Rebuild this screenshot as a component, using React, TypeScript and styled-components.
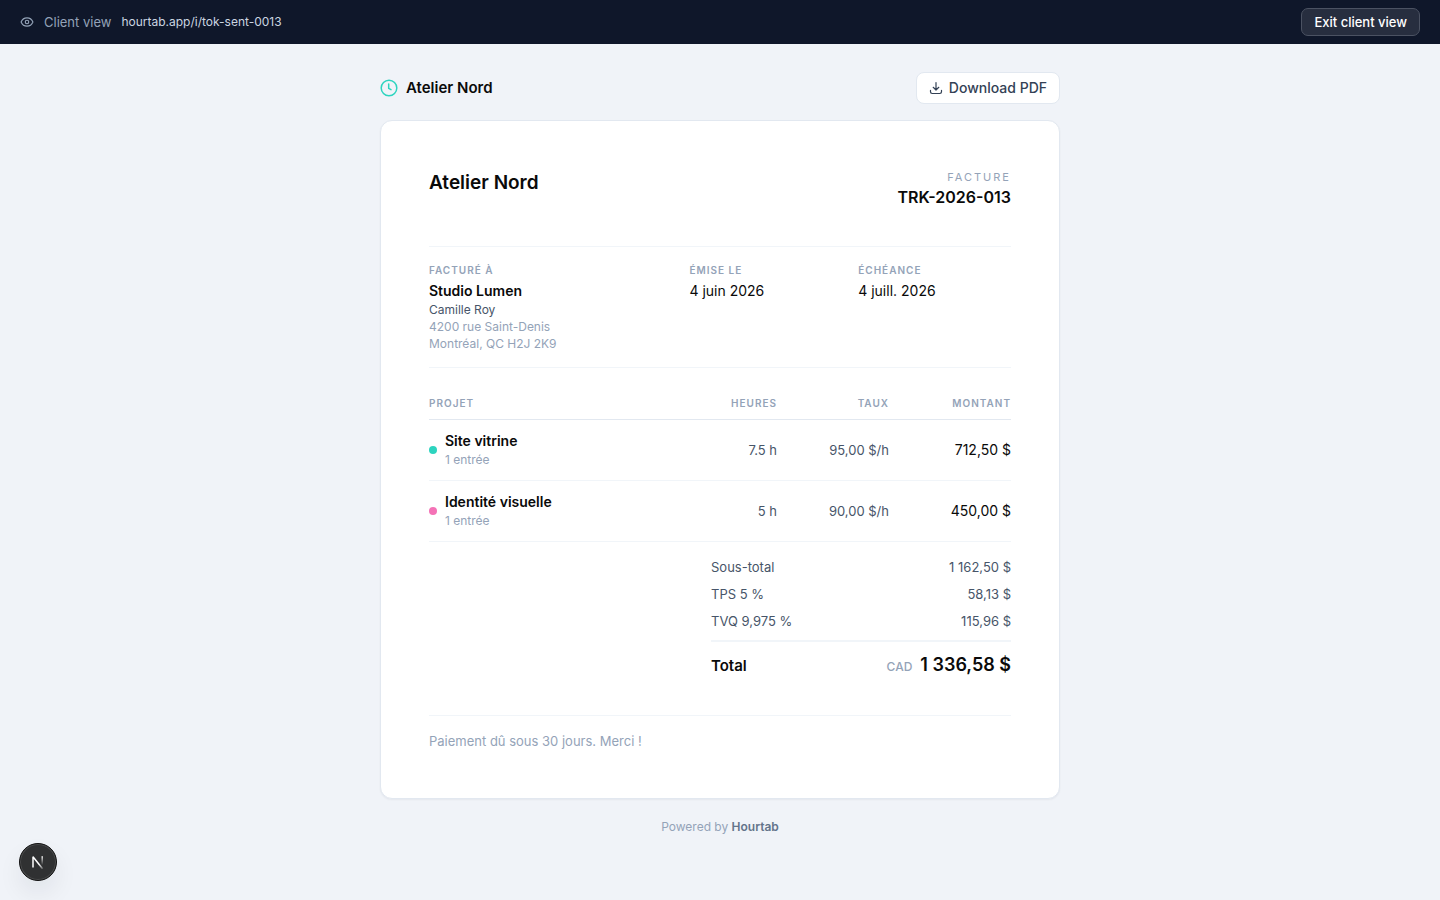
import React from "react";
import styled, { createGlobalStyle } from "styled-components";
import { Eye } from "lucide-react";

const ink = "#0a0a0a";
const slate = "#475569";
const muted = "#94a3b8";
const rule = "#f1f5f9";

const GlobalStyle = createGlobalStyle`
  *, *::before, *::after { box-sizing: border-box; }
  body {
    margin: 0;
    background: #f0f3f8;
    color: ${ink};
    font-family: Inter, "Liberation Sans", sans-serif;
    font-size: 13px;
    line-height: 18px;
    -webkit-font-smoothing: antialiased;
  }
  button { font: inherit; cursor: pointer; }
  h1, h2, p, dl, dd { margin: 0; }
`;

const TopBar = styled.header`
  display: flex;
  align-items: center;
  justify-content: space-between;
  height: 44px;
  padding: 0 20px;
  background: #0f172a;
`;

const ViewInfo = styled.div`
  display: flex;
  align-items: center;
  gap: 10px;
  color: ${muted};
  font-size: 13px;
`;

const ViewUrl = styled.span`
  color: #cbd5e1;
  font-size: 12px;
`;

const ExitButton = styled.button`
  height: 28px;
  padding: 0 12px;
  border: 1px solid #4b5262;
  border-radius: 7px;
  background: #272e3f;
  color: #fff;
  font-size: 13px;
  font-weight: 500;
`;

const Page = styled.main`
  max-width: 728px;
  margin: 0 auto;
  padding: 28px 24px 48px;
`;

const Toolbar = styled.div`
  display: flex;
  align-items: center;
  justify-content: space-between;
  margin-bottom: 16px;
`;

const Brand = styled.div`
  display: flex;
  align-items: center;
  gap: 8px;
  font-size: 15px;
  font-weight: 600;
`;

const DownloadButton = styled.button`
  display: flex;
  align-items: center;
  gap: 6px;
  height: 32px;
  padding: 0 12px;
  border: 1px solid #e2e8f0;
  border-radius: 8px;
  background: #fff;
  color: #334155;
  font-size: 14px;
  font-weight: 500;
`;

const Card = styled.article`
  padding: 48px;
  border: 1px solid #e2e8f0;
  border-radius: 12px;
  background: #fff;
  box-shadow: 0 1px 2px rgba(15, 23, 42, 0.05);
`;

const CardHead = styled.div`
  display: flex;
  justify-content: space-between;
  padding-bottom: 36px;
  border-bottom: 1px solid ${rule};
`;

const Issuer = styled.h1`
  font-size: 19px;
  font-weight: 600;
  line-height: 28px;
`;

const Reference = styled.div`
  text-align: right;
`;

const Kind = styled.p`
  color: ${muted};
  font-size: 11px;
  line-height: 16px;
  letter-spacing: 2px;
`;

const Number = styled.h2`
  font-size: 16px;
  font-weight: 600;
  line-height: 25px;
`;

const Details = styled.dl`
  display: grid;
  grid-template-columns: 1.6fr 1fr 1fr;
  gap: 16px;
  padding: 16px 0 15px;
  border-bottom: 1px solid ${rule};
`;

const DetailLabel = styled.dt`
  margin-bottom: 4px;
  color: ${muted};
  font-size: 10px;
  font-weight: 600;
  line-height: 14px;
  letter-spacing: 1px;
`;

const DetailValue = styled.dd<{ $strong?: boolean }>`
  font-size: 14px;
  font-weight: ${(p) => (p.$strong ? 600 : 400)};
  line-height: 20px;
`;

const DetailLine = styled.dd<{ $soft?: boolean }>`
  color: ${(p) => (p.$soft ? muted : slate)};
  font-size: 12px;
  line-height: 17px;
`;

const Entries = styled.table`
  width: 100%;
  margin-top: 24px;
  border-collapse: separate;
  border-spacing: 0;
`;

const HeadCell = styled.th<{ $width?: number }>`
  width: ${(p) => (p.$width ? `${p.$width}px` : "auto")};
  padding: 3px 0 8px;
  border-bottom: 1px solid #e2e8f0;
  color: ${muted};
  font-size: 10px;
  font-weight: 600;
  line-height: 16px;
  letter-spacing: 1px;
  text-align: ${(p) => (p.$width ? "right" : "left")};
`;

const Cell = styled.td<{ $amount?: boolean }>`
  padding: 12px 0;
  border-bottom: 1px solid ${rule};
  color: ${(p) => (p.$amount ? ink : slate)};
  font-size: ${(p) => (p.$amount ? 14 : 13)}px;
  text-align: right;
`;

const Project = styled.div`
  display: flex;
  align-items: center;
  gap: 8px;
  text-align: left;
`;

const Dot = styled.span<{ $color: string }>`
  width: 8px;
  height: 8px;
  border-radius: 50%;
  background: ${(p) => p.$color};
`;

const ProjectName = styled.div`
  margin-bottom: 2px;
  color: ${ink};
  font-size: 14px;
  font-weight: 600;
`;

const ProjectNote = styled.div`
  color: ${muted};
  font-size: 12px;
  line-height: 16px;
`;

const Totals = styled.dl`
  max-width: 300px;
  margin: 12px 0 35px auto;
`;

const TotalRow = styled.div`
  display: flex;
  justify-content: space-between;
  color: ${slate};
  line-height: 27px;
`;

const GrandTotal = styled.div`
  display: flex;
  align-items: center;
  justify-content: space-between;
  margin-top: 5px;
  padding-top: 10px;
  border-top: 2px solid ${rule};
  font-size: 15px;
  font-weight: 600;
  line-height: 26px;
`;

const GrandAmount = styled.dd`
  display: flex;
  align-items: baseline;
  gap: 8px;
  font-size: 18px;
`;

const Currency = styled.span`
  color: ${muted};
  font-size: 12px;
  font-weight: 500;
`;

const Terms = styled.p`
  padding-top: 16px;
  border-top: 1px solid ${rule};
  color: ${muted};
  font-size: 13px;
`;

const Footer = styled.footer`
  margin-top: 20px;
  color: ${muted};
  font-size: 12px;
  line-height: 16px;
  text-align: center;
`;

const FooterBrand = styled.strong`
  color: #64748b;
  font-weight: 600;
`;

const DevBadge = styled.button`
  position: fixed;
  bottom: 19px;
  left: 19px;
  display: grid;
  place-items: center;
  width: 38px;
  height: 38px;
  padding: 0;
  border: 1px solid #111;
  border-radius: 50%;
  background: #303132;
  box-shadow: inset 0 0 0 1px #4a4b4c, 0 12px 24px rgba(15, 23, 42, 0.07);
`;

const entries = [
  { name: "Site vitrine", color: "#2dd4bf", hours: "7.5 h", rate: "95,00 $/h", amount: "712,50 $" },
  { name: "Identité visuelle", color: "#f472b6", hours: "5 h", rate: "90,00 $/h", amount: "450,00 $" },
];

const totals = [
  ["Sous-total", "1 162,50 $"],
  ["TPS 5 %", "58,13 $"],
  ["TVQ 9,975 %", "115,96 $"],
];

export default function App() {
  return (
    <>
      <GlobalStyle />
      <TopBar>
        <ViewInfo>
          <Eye size={14} strokeWidth={2} aria-hidden />
          <span>Client view</span>
          <ViewUrl>hourtab.app/i/tok-sent-0013</ViewUrl>
        </ViewInfo>
        <ExitButton type="button">Exit client view</ExitButton>
      </TopBar>

      <Page>
        <Toolbar>
          <Brand>
            <svg width="18" height="18" viewBox="0 0 18 18" fill="none" stroke="#2dd4bf" strokeLinecap="round" aria-hidden>
              <circle cx="9" cy="9" r="7.8" strokeWidth="1.5" />
              <path d="M8.7 5v4.4l2.3 1.2" strokeWidth="1.5" strokeLinejoin="round" />
            </svg>
            Atelier Nord
          </Brand>
          <DownloadButton type="button">
            <svg width="14" height="14" viewBox="0 0 14 14" fill="none" stroke="currentColor" strokeWidth="1.2" strokeLinecap="round" strokeLinejoin="round" aria-hidden>
              <path d="M7 1.5v7.5M4.2 6.3 7 9l2.8-2.7M1.5 9.3v1.5a1.7 1.7 0 0 0 1.7 1.7h7.6a1.7 1.7 0 0 0 1.7-1.7V9.3" />
            </svg>
            Download PDF
          </DownloadButton>
        </Toolbar>

        <Card>
          <CardHead>
            <Issuer>Atelier Nord</Issuer>
            <Reference>
              <Kind>FACTURE</Kind>
              <Number>TRK-2026-013</Number>
            </Reference>
          </CardHead>

          <Details>
            <div>
              <DetailLabel>FACTURÉ À</DetailLabel>
              <DetailValue $strong>Studio Lumen</DetailValue>
              <DetailLine>Camille Roy</DetailLine>
              <DetailLine $soft>4200 rue Saint-Denis</DetailLine>
              <DetailLine $soft>Montréal, QC H2J 2K9</DetailLine>
            </div>
            <div>
              <DetailLabel>ÉMISE LE</DetailLabel>
              <DetailValue>4 juin 2026</DetailValue>
            </div>
            <div>
              <DetailLabel>ÉCHÉANCE</DetailLabel>
              <DetailValue>4 juill. 2026</DetailValue>
            </div>
          </Details>

          <Entries>
            <thead>
              <tr>
                <HeadCell scope="col">PROJET</HeadCell>
                <HeadCell scope="col" $width={80}>HEURES</HeadCell>
                <HeadCell scope="col" $width={112}>TAUX</HeadCell>
                <HeadCell scope="col" $width={122}>MONTANT</HeadCell>
              </tr>
            </thead>
            <tbody>
              {entries.map((e) => (
                <tr key={e.name}>
                  <Cell>
                    <Project>
                      <Dot $color={e.color} />
                      <div>
                        <ProjectName>{e.name}</ProjectName>
                        <ProjectNote>1 entrée</ProjectNote>
                      </div>
                    </Project>
                  </Cell>
                  <Cell>{e.hours}</Cell>
                  <Cell>{e.rate}</Cell>
                  <Cell $amount>{e.amount}</Cell>
                </tr>
              ))}
            </tbody>
          </Entries>

          <Totals>
            {totals.map(([label, value]) => (
              <TotalRow key={label}>
                <dt>{label}</dt>
                <dd>{value}</dd>
              </TotalRow>
            ))}
            <GrandTotal>
              <dt>Total</dt>
              <GrandAmount>
                <Currency>CAD</Currency>
                1 336,58 $
              </GrandAmount>
            </GrandTotal>
          </Totals>

          <Terms>Paiement dû sous 30 jours. Merci !</Terms>
        </Card>

        <Footer>
          Powered by <FooterBrand>Hourtab</FooterBrand>
        </Footer>
      </Page>

      <DevBadge type="button" aria-label="Open developer tools">
        <svg width="14" height="14" viewBox="0 0 14 14" fill="none" aria-hidden>
          <defs>
            <linearGradient id="diagonal" x1="2" y1="2" x2="12" y2="14" gradientUnits="userSpaceOnUse">
              <stop offset="0.6" stopColor="#fff" />
              <stop offset="1" stopColor="#fff" stopOpacity="0.2" />
            </linearGradient>
            <linearGradient id="stem" x1="0" y1="1" x2="0" y2="10" gradientUnits="userSpaceOnUse">
              <stop stopColor="#fff" />
              <stop offset="1" stopColor="#fff" stopOpacity="0" />
            </linearGradient>
          </defs>
          <path d="M2 12.5V1.8l9.6 12" stroke="url(#diagonal)" strokeWidth="1.5" strokeLinejoin="bevel" />
          <rect x="10.5" y="1.2" width="1.4" height="8.8" fill="url(#stem)" />
        </svg>
      </DevBadge>
    </>
  );
}
